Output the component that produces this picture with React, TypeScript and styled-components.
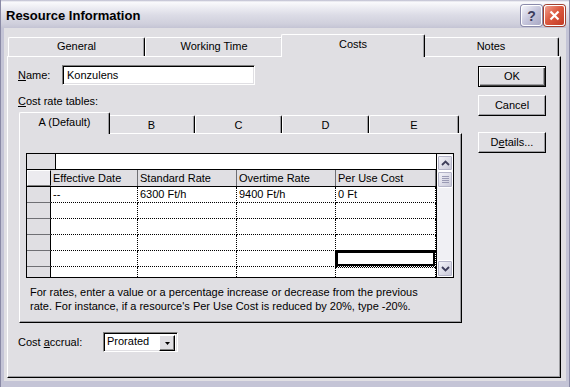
import React from 'react';
import styled, { createGlobalStyle } from 'styled-components';

const FACE = '#e0dfe3';
const SHADOW = '#9d9da1';

const GlobalStyle = createGlobalStyle`
  html, body { margin: 0; padding: 0; background: #c8c8d8; }
  body { font-family: "Liberation Sans", Arial, sans-serif; font-size: 11px; color: #000; }
  * { box-sizing: border-box; }
`;

const Window = styled.div`
  width: 570px;
  height: 387px;
  display: flex;
  flex-direction: column;
  background: #c4c4d6;
  border-left: 1px solid #8a8aa6;
  border-right: 1px solid #8a8aa6;
  overflow: hidden;
`;

const TitleBar = styled.div`
  height: 28px;
  flex: none;
  display: flex;
  align-items: center;
  justify-content: space-between;
  padding: 3px 4px 0 5px;
  background: linear-gradient(#b8b8cc 0, #fafafc 2px, #eeeef4 7px, #dcdce6 15px, #cfcfdc 24px, #c4c4d4 28px);
`;

const TitleText = styled.div`
  font-size: 13px;
  font-weight: bold;
  color: #000;
`;

const CaptionButtons = styled.div`
  display: flex;
  gap: 2px;
`;

const CaptionButton = styled.div<{ $close?: boolean }>`
  width: 21px;
  height: 21px;
  border: 1px solid #fff;
  border-radius: 3px;
  display: flex;
  align-items: center;
  justify-content: center;
  box-shadow: 0 0 0 1px ${p => (p.$close ? '#a04030' : '#8a8aaa')};
  background: ${p =>
    p.$close
      ? 'linear-gradient(135deg, #f0a090 0%, #dc5a40 45%, #c23a24 100%)'
      : 'linear-gradient(135deg, #f4f4fa 0%, #c6c6dc 50%, #a8a8c4 100%)'};
  color: #3c3c5c;
  font-size: 14px;
  font-weight: bold;
`;

const Body = styled.div`
  flex: 1;
  background: ${FACE};
  margin: 0 3px 6px 3px;
  padding: 6px 5px 3px 3px;
  display: flex;
  flex-direction: column;
`;

const TabStrip = styled.div<{ $height: number; $lead: number }>`
  display: flex;
  align-items: flex-end;
  height: ${p => p.$height}px;
  padding-left: ${p => p.$lead}px;
  position: relative;
  z-index: 1;
`;

const Tab = styled.div<{ $width: number; $active?: boolean; $h: number; $lift: number }>`
  width: ${p => p.$width + (p.$active ? 4 : 0)}px;
  height: ${p => (p.$active ? p.$h + 4 : p.$h)}px;
  margin: ${p => (p.$active ? '0 -2px -1px -2px' : '0')};
  background: ${FACE};
  border-top: 1px solid #fff;
  border-left: 1px solid #fff;
  border-right: 1px solid #000;
  box-shadow: inset -1px 0 ${SHADOW};
  border-radius: 2px 2px 0 0;
  display: flex;
  align-items: center;
  justify-content: center;
  padding-bottom: ${p => (p.$active ? p.$lift + 3 : p.$lift)}px;
  z-index: ${p => (p.$active ? 2 : 0)};
  position: relative;
`;

const Panel = styled.div<{ $height: number }>`
  height: ${p => p.$height}px;
  background: ${FACE};
  border: 1px solid;
  border-color: #fff #000 #000 #fff;
  box-shadow: inset -1px -1px ${SHADOW};
`;

const CostsPanel = styled(Panel)`
  display: flex;
  padding: 8px 0 0 10px;
`;

const LeftCol = styled.div`
  width: 444px;
  display: flex;
  flex-direction: column;
`;

const RightCol = styled.div`
  margin: 1px 0 0 16px;
  display: flex;
  flex-direction: column;
`;

const FieldRow = styled.div`
  display: flex;
  align-items: center;
  height: 20px;
`;

const Label = styled.div<{ $width?: number }>`
  width: ${p => (p.$width ? `${p.$width}px` : 'auto')};
  line-height: 13px;
  white-space: nowrap;
`;

const Key = styled.span`
  text-decoration: underline;
`;

const TextBox = styled.div<{ $width: number }>`
  width: ${p => p.$width}px;
  height: 20px;
  background: #fff;
  border: 1px solid;
  border-color: #808080 #fff #fff #808080;
  box-shadow: inset 1px 1px #000, inset -1px -1px ${FACE};
  padding: 3px 0 0 4px;
  line-height: 13px;
`;

const SectionLabel = styled(Label)`
  margin-top: 10px;
`;

const InnerTabs = styled.div`
  margin: 4px 0 0 1px;
`;

const InnerPanel = styled(Panel)`
  width: 443px;
  padding: 19px 0 0 6px;
`;

const Grid = styled.div`
  width: 428px;
  height: 125px;
  border: 1px solid #000;
  display: flex;
  background: #fff;
`;

const GridMain = styled.div`
  width: 409px;
  overflow: hidden;
  display: flex;
  flex-direction: column;
`;

const EntryRow = styled.div`
  flex: none;
  height: 16px;
  display: flex;
  border-bottom: 1px solid #000;
`;

const EntryCorner = styled.div`
  width: 29px;
  background: ${FACE};
  border-right: 1px solid #000;
`;

const HeaderRow = styled.div`
  flex: none;
  height: 17px;
  display: flex;
  border-bottom: 1px solid #000;
  background: ${FACE};
`;

const CornerButton = styled.div`
  width: 24px;
  border: 1px solid;
  border-color: #fff #808080 #808080 #fff;
  border-right: 1px solid #000;
  background: #ecebef;
`;

const HeaderCell = styled.div<{ $width: number }>`
  width: ${p => p.$width}px;
  border-right: 1px solid #6f6f74;
  padding: 2px 0 0 2px;
  line-height: 13px;
  white-space: nowrap;
  overflow: hidden;
`;

const DataRow = styled.div`
  flex: none;
  height: 16px;
  display: flex;
`;

const RowHead = styled.div`
  width: 24px;
  background: ${FACE};
  border-right: 1px solid #000;
  border-bottom: 1px solid #6f6f74;
`;

const Cell = styled.div<{ $width: number; $selected?: boolean }>`
  width: ${p => p.$width}px;
  border-right: 1px dotted #000;
  border-bottom: 1px dotted #000;
  padding: 1px 0 0 2px;
  line-height: 13px;
  white-space: nowrap;
  outline: ${p => (p.$selected ? '1px dotted #000' : 'none')};
  box-shadow: ${p => (p.$selected ? 'inset 0 0 0 2px #000' : 'none')};
  position: relative;
`;

const Scrollbar = styled.div`
  width: 17px;
  background: #f0f0f4;
  border-left: 1px solid #000;
  display: flex;
  flex-direction: column;
  justify-content: space-between;
`;

const ScrollButton = styled.div<{ $h: number }>`
  height: ${p => p.$h}px;
  border: 1px solid #fff;
  border-radius: 2px;
  box-shadow: inset 0 0 0 1px #b4b4c8;
  background: linear-gradient(135deg, #f6f6fa 0%, #dcdce8 55%, #c6c6d6 100%);
  display: flex;
  align-items: center;
  justify-content: center;
`;

const ScrollTrack = styled.div`
  flex: 1;
  display: flex;
  flex-direction: column;
  padding-top: 1px;
`;

const Note = styled.div`
  margin-top: 7px;
  padding-left: 4px;
  line-height: 14px;
`;

const AccrualRow = styled(FieldRow)`
  margin-top: 9px;
`;

const Combo = styled(TextBox)`
  display: flex;
  justify-content: space-between;
  padding: 2px 2px 2px 3px;
`;

const DropButton = styled.div`
  width: 16px;
  height: 16px;
  background: ${FACE};
  border: 1px solid;
  border-color: #fff #000 #000 #fff;
  box-shadow: inset -1px -1px #808080;
  display: flex;
  align-items: center;
  justify-content: center;
`;

const PushButton = styled.div<{ $default?: boolean; $gap: number }>`
  width: 68px;
  height: 21px;
  margin-top: ${p => p.$gap}px;
  background: ${FACE};
  display: flex;
  align-items: center;
  justify-content: center;
  line-height: 13px;
  border: 1px solid;
  border-color: ${p => (p.$default ? '#000' : '#fff #000 #000 #fff')};
  box-shadow: ${p =>
    p.$default
      ? `inset 1px 1px #fff, inset -1px -1px #404040, inset -2px -2px ${SHADOW}`
      : `inset -1px -1px ${SHADOW}`};
`;

const outerTabs = [
  { label: 'General', width: 137 },
  { label: 'Working Time', width: 138 },
  { label: 'Costs', width: 140, active: true },
  { label: 'Notes', width: 136 },
];

const rateTabs = [
  { label: 'A (Default)', width: 87, active: true },
  { label: 'B', width: 87 },
  { label: 'C', width: 87 },
  { label: 'D', width: 87 },
  { label: 'E', width: 90 },
];

const columns = [
  { title: 'Effective Date', width: 87 },
  { title: 'Standard Rate', width: 99 },
  { title: 'Overtime Rate', width: 99 },
  { title: 'Per Use Cost', width: 100 },
];

const rows = [
  ['--', '6300 Ft/h', '9400 Ft/h', '0 Ft'],
  ['', '', '', ''],
  ['', '', '', ''],
  ['', '', '', ''],
  ['', '', '', ''],
  ['', '', '', ''],
];

function Chevron({ up }: { up?: boolean }) {
  return (
    <svg width="9" height="6" viewBox="0 0 9 6">
      <path
        d={up ? 'M1 5 L4.5 1.5 L8 5' : 'M1 1 L4.5 4.5 L8 1'}
        fill="none"
        stroke="#3d3d5a"
        strokeWidth="1.8"
      />
    </svg>
  );
}

export default function App() {
  return (
    <>
      <GlobalStyle />
      <Window>
        <TitleBar>
          <TitleText>Resource Information</TitleText>
          <CaptionButtons>
            <CaptionButton>?</CaptionButton>
            <CaptionButton $close>
              <svg width="11" height="11" viewBox="0 0 11 11">
                <path d="M1.5 1.5 L9.5 9.5 M9.5 1.5 L1.5 9.5" stroke="#fff" strokeWidth="2.2" />
              </svg>
            </CaptionButton>
          </CaptionButtons>
        </TitleBar>
        <Body>
          <TabStrip $height={22} $lead={1}>
            {outerTabs.map(t => (
              <Tab key={t.label} $width={t.width} $active={t.active} $h={19} $lift={2}>
                {t.label}
              </Tab>
            ))}
          </TabStrip>
          <CostsPanel $height={322}>
            <LeftCol>
              <FieldRow>
                <Label $width={44}>
                  <Key>N</Key>ame:
                </Label>
                <TextBox $width={193}>Konzulens</TextBox>
              </FieldRow>
              <SectionLabel>
                <Key>C</Key>ost rate tables:
              </SectionLabel>
              <InnerTabs>
                <TabStrip $height={21} $lead={2}>
                  {rateTabs.map(t => (
                    <Tab key={t.label} $width={t.width} $active={t.active} $h={18} $lift={0}>
                      {t.label}
                    </Tab>
                  ))}
                </TabStrip>
                <InnerPanel $height={190}>
                  <Grid>
                    <GridMain>
                      <EntryRow>
                        <EntryCorner />
                      </EntryRow>
                      <HeaderRow>
                        <CornerButton />
                        {columns.map(c => (
                          <HeaderCell key={c.title} $width={c.width}>
                            {c.title}
                          </HeaderCell>
                        ))}
                      </HeaderRow>
                      {rows.map((r, i) => (
                        <DataRow key={i}>
                          <RowHead />
                          {r.map((v, j) => (
                            <Cell key={j} $width={columns[j].width} $selected={i === 4 && j === 3}>
                              {v}
                            </Cell>
                          ))}
                        </DataRow>
                      ))}
                    </GridMain>
                    <Scrollbar>
                      <ScrollTrack>
                        <ScrollButton $h={16}>
                          <Chevron up />
                        </ScrollButton>
                        <ScrollButton $h={17}>
                          <svg width="7" height="7" viewBox="0 0 7 7">
                            <path d="M0 0.5 H7 M0 2.5 H7 M0 4.5 H7 M0 6.5 H7" stroke="#9a9ab4" strokeWidth="1" />
                          </svg>
                        </ScrollButton>
                      </ScrollTrack>
                      <ScrollButton $h={17}>
                        <Chevron />
                      </ScrollButton>
                    </Scrollbar>
                  </Grid>
                  <Note>
                    For rates, enter a value or a percentage increase or decrease from the previous
                    <br />
                    rate. For instance, if a resource's Per Use Cost is reduced by 20%, type -20%.
                  </Note>
                </InnerPanel>
              </InnerTabs>
              <AccrualRow>
                <Label $width={85}>
                  Cost <Key>a</Key>ccrual:
                </Label>
                <Combo $width={75}>
                  <span>Prorated</span>
                  <DropButton>
                    <svg width="5" height="3" viewBox="0 0 5 3">
                      <path d="M0 0 H5 L2.5 3 Z" fill="#000" />
                    </svg>
                  </DropButton>
                </Combo>
              </AccrualRow>
            </LeftCol>
            <RightCol>
              <PushButton $default $gap={0}>OK</PushButton>
              <PushButton $gap={8}>Cancel</PushButton>
              <PushButton $gap={16}>
                D<Key>e</Key>tails...
              </PushButton>
            </RightCol>
          </CostsPanel>
        </Body>
      </Window>
    </>
  );
}
